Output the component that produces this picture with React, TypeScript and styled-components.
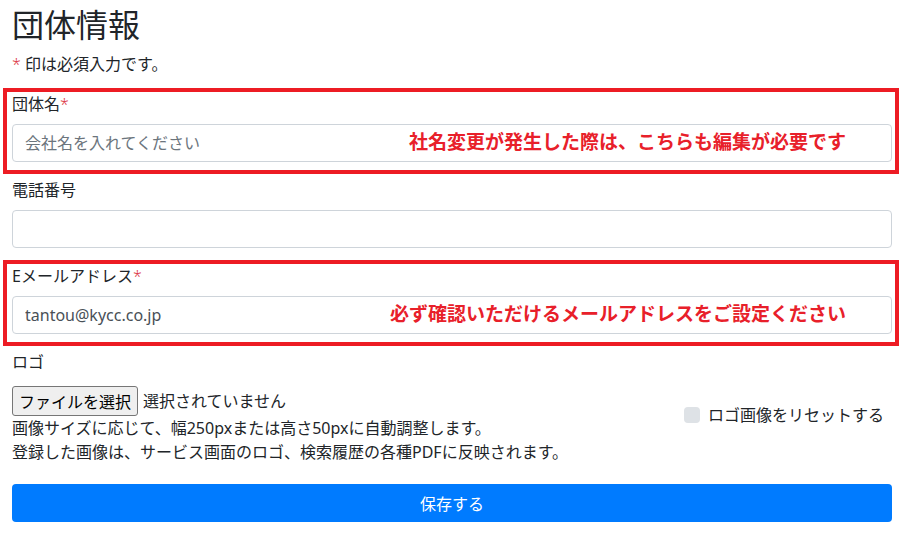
import React from "react";
import styled, {createGlobalStyle, css} from "styled-components";

const GlobalStyle = createGlobalStyle`
  body {
    margin: 0;
    background: #fff;
    color: #212529;
    font-family: "Noto Sans", "Noto Sans CJK JP", sans-serif;
    font-size: 16px;
    line-height: 1.5;
  }
  * {
    box-sizing: border-box;
  }
`

export default function App() {
    return <Page>
        <GlobalStyle/>
        <Title>団体情報</Title>
        <Note><Required>*</Required> 印は必須入力です。</Note>

        <FormGroup $annotated>
            <Label>団体名<Required>*</Required></Label>
            <InputWrap>
                <TextInput placeholder="会社名を入れてください"/>
                <Annotation>社名変更が発生した際は、こちらも編集が必要です</Annotation>
            </InputWrap>
        </FormGroup>

        <FormGroup>
            <Label>電話番号</Label>
            <InputWrap>
                <TextInput/>
            </InputWrap>
        </FormGroup>

        <FormGroup $annotated>
            <Label>Eメールアドレス<Required>*</Required></Label>
            <InputWrap>
                <TextInput defaultValue="tantou@kycc.co.jp"/>
                <Annotation>必ず確認いただけるメールアドレスをご設定ください</Annotation>
            </InputWrap>
        </FormGroup>

        <LogoGroup>
            <Label>ロゴ</Label>
            <LogoRow>
                <div>
                    <FileRow>
                        <FileButton type="button">ファイルを選択</FileButton>
                        <span>選択されていません</span>
                    </FileRow>
                    <HelpText>画像サイズに応じて、幅250pxまたは高さ50pxに自動調整します。</HelpText>
                    <HelpText>登録した画像は、サービス画面のロゴ、検索履歴の各種PDFに反映されます。</HelpText>
                </div>
                <CheckLabel>
                    <CheckBox/>
                    ロゴ画像をリセットする
                </CheckLabel>
            </LogoRow>
        </LogoGroup>

        <SaveButton type="button">保存する</SaveButton>
    </Page>
}

const Page = styled.div`
  width: 905px;
  padding: 6px 13px 0 12px;
`

const Title = styled.h2`
  margin: 0 0 8px;
  font-size: 32px;
  font-weight: 400;
  line-height: 1.2;
`

const Note = styled.p`
  margin: 0 0 16px;
`

const Required = styled.span`
  color: #dc3545;
  font-weight: 300;
`

const FormGroup = styled.div<{ $annotated?: boolean }>`
  position: relative;
  margin-bottom: 16px;

  ${p => p.$annotated && css`
    &::after {
      content: "";
      position: absolute;
      top: -4px;
      left: -9px;
      right: -7px;
      bottom: -12px;
      border: 4px solid #ed1c24;
      pointer-events: none;
    }
  `}
`

const Label = styled.label`
  display: block;
  margin-bottom: 8px;
`

const InputWrap = styled.div`
  position: relative;
`

const TextInput = styled.input`
  display: block;
  width: 100%;
  height: 38px;
  padding: 6px 12px;
  border: 1px solid #ced4da;
  border-radius: 4px;
  font-family: inherit;
  font-size: 16px;
  color: #495057;
  background: #fff;

  &::placeholder {
    color: #6c757d;
  }
`

const Annotation = styled.span`
  position: absolute;
  top: 0;
  bottom: 3px;
  right: 46px;
  display: flex;
  align-items: center;
  color: #e8202a;
  font-size: 19px;
  font-weight: 700;
  pointer-events: none;
`

const LogoGroup = styled.div`
  margin-bottom: 20px;
`

const LogoRow = styled.div`
  display: flex;
  justify-content: space-between;
  align-items: center;
`

const FileRow = styled.div`
  display: flex;
  align-items: center;
  gap: 5px;
  height: 30px;
  margin-top: 4px;
`

const FileButton = styled.button`
  height: 30px;
  padding: 0 6px;
  border: 1px solid #767676;
  border-radius: 3px;
  background: #efefef;
  color: #000;
  font-family: inherit;
  font-size: 16px;
`

const HelpText = styled.div`
  line-height: 24px;
`

const CheckLabel = styled.label`
  display: flex;
  align-items: center;
  gap: 8px;
  padding-right: 8px;
  margin-bottom: 16px;
`

const CheckBox = styled.span`
  width: 16px;
  height: 16px;
  border-radius: 4px;
  background: #dee2e6;
`

const SaveButton = styled.button`
  display: block;
  width: 100%;
  height: 38px;
  border: none;
  border-radius: 4px;
  background: #007bff;
  color: #fff;
  font-family: inherit;
  font-size: 16px;
`
